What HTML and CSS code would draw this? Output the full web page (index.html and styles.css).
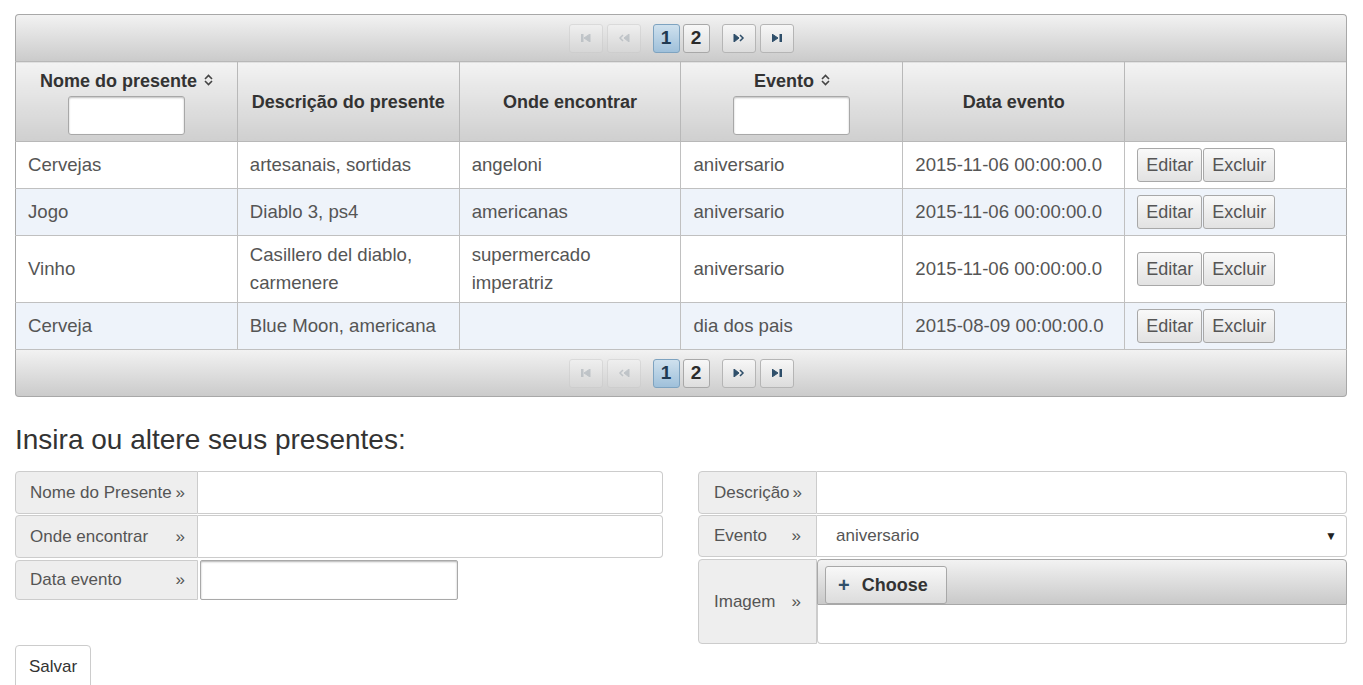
FILE: index.html
```html
<!DOCTYPE html>
<html lang="pt">
<head>
<meta charset="utf-8">
<title>Presentes</title>
<link rel="stylesheet" href="styles.css">
</head>
<body>
<div class="page">
  <div class="datatable">
    <div class="paginator top">
      <span class="pbtn disabled"><svg width="10" height="8" viewBox="0 0 10 8"><rect x="0" y="0" width="2" height="8"/><path d="M9 0 L3 4 L9 8 Z"/></svg></span>
      <span class="pbtn disabled"><svg width="12" height="8" viewBox="0 0 12 8"><path d="M5 1 L2 4 L5 7" fill="none" stroke-width="1.5"/><path d="M11 0 L6 4 L11 8 Z"/></svg></span>
      <span class="pages"><span class="page-num active">1</span><span class="page-num">2</span></span>
      <span class="pbtn"><svg width="12" height="8" viewBox="0 0 12 8"><path d="M1 0 L6 4 L1 8 Z"/><path d="M7 1 L10 4 L7 7" fill="none" stroke-width="1.5"/></svg></span>
      <span class="pbtn"><svg width="10" height="8" viewBox="0 0 10 8"><path d="M0 0 L6 4 L0 8 Z"/><rect x="8" y="0" width="2" height="8"/></svg></span>
    </div>
    <table class="grid">
      <thead>
        <tr>
          <th><div class="th-title">Nome do presente <span class="sort"><svg width="9" height="12" viewBox="0 0 9 12"><path d="M1 5 L4.5 1.5 L8 5 M1 7 L4.5 10.5 L8 7" fill="none" stroke-width="1.6"/></svg></span></div><input class="filter" type="text"></th>
          <th><div class="th-title">Descrição do presente</div></th>
          <th><div class="th-title">Onde encontrar</div></th>
          <th><div class="th-title">Evento <span class="sort"><svg width="9" height="12" viewBox="0 0 9 12"><path d="M1 5 L4.5 1.5 L8 5 M1 7 L4.5 10.5 L8 7" fill="none" stroke-width="1.6"/></svg></span></div><input class="filter" type="text"></th>
          <th><div class="th-title">Data evento</div></th>
          <th></th>
        </tr>
      </thead>
      <tbody>
        <tr>
          <td>Cervejas</td><td>artesanais, sortidas</td><td>angeloni</td><td>aniversario</td><td>2015-11-06 00:00:00.0</td>
          <td><span class="btn">Editar</span><span class="btn">Excluir</span></td>
        </tr>
        <tr class="alt">
          <td>Jogo</td><td>Diablo 3, ps4</td><td>americanas</td><td>aniversario</td><td>2015-11-06 00:00:00.0</td>
          <td><span class="btn">Editar</span><span class="btn">Excluir</span></td>
        </tr>
        <tr>
          <td>Vinho</td><td>Casillero del diablo, carmenere</td><td>supermercado imperatriz</td><td>aniversario</td><td>2015-11-06 00:00:00.0</td>
          <td><span class="btn">Editar</span><span class="btn">Excluir</span></td>
        </tr>
        <tr class="alt">
          <td>Cerveja</td><td>Blue Moon, americana</td><td></td><td>dia dos pais</td><td>2015-08-09 00:00:00.0</td>
          <td><span class="btn">Editar</span><span class="btn">Excluir</span></td>
        </tr>
      </tbody>
    </table>
    <div class="paginator bottom">
      <span class="pbtn disabled"><svg width="10" height="8" viewBox="0 0 10 8"><rect x="0" y="0" width="2" height="8"/><path d="M9 0 L3 4 L9 8 Z"/></svg></span>
      <span class="pbtn disabled"><svg width="12" height="8" viewBox="0 0 12 8"><path d="M5 1 L2 4 L5 7" fill="none" stroke-width="1.5"/><path d="M11 0 L6 4 L11 8 Z"/></svg></span>
      <span class="pages"><span class="page-num active">1</span><span class="page-num">2</span></span>
      <span class="pbtn"><svg width="12" height="8" viewBox="0 0 12 8"><path d="M1 0 L6 4 L1 8 Z"/><path d="M7 1 L10 4 L7 7" fill="none" stroke-width="1.5"/></svg></span>
      <span class="pbtn"><svg width="10" height="8" viewBox="0 0 10 8"><path d="M0 0 L6 4 L0 8 Z"/><rect x="8" y="0" width="2" height="8"/></svg></span>
    </div>
  </div>

  <h2 class="form-title">Insira ou altere seus presentes:</h2>

  <div class="form-grid">
    <div class="col">
      <div class="igroup g1">
        <span class="addon w-left"><span>Nome do Presente</span><span>»</span></span>
        <span class="field"></span>
      </div>
      <div class="igroup g2">
        <span class="addon w-left"><span>Onde encontrar</span><span>»</span></span>
        <span class="field"></span>
      </div>
      <div class="igroup g3">
        <span class="addon w-left"><span>Data evento</span><span>»</span></span>
        <span class="plain-input"></span>
      </div>
    </div>
    <div class="col">
      <div class="igroup g1">
        <span class="addon w-right"><span>Descrição</span><span>»</span></span>
        <span class="field"></span>
      </div>
      <div class="igroup g2r">
        <span class="addon w-right"><span>Evento</span><span>»</span></span>
        <span class="field select"><span>aniversario</span><span class="caret">▼</span></span>
      </div>
      <div class="igroup g3r">
        <span class="addon w-right"><span>Imagem</span><span>»</span></span>
        <span class="upload">
          <span class="upload-bar"><span class="choose"><span class="plus">+</span>Choose</span></span>
          <span class="upload-body"></span>
        </span>
      </div>
    </div>
  </div>
  <div class="actions"><span class="save">Salvar</span></div>
</div>
</body>
</html>
```
FILE: styles.css
```css
* { box-sizing: border-box; }
html, body { margin: 0; padding: 0; background: #fff; }
body { font-family: "Liberation Sans", Arial, sans-serif; color: #555; overflow: hidden; }
.page { padding: 14px 16px 0 15px; width: 1363px; }

.datatable { width: 1332px; }
.paginator {
  height: 47px;
  border: 1px solid #a8a8a8;
  background: linear-gradient(#f2f2f2, #cbcbcb);
  display: flex;
  align-items: center;
  justify-content: center;
  gap: 4px;
  padding-left: 0;
}
.paginator.top { border-radius: 4px 4px 0 0; border-bottom: none; }
.paginator.bottom { border-radius: 0 0 4px 4px; border-top: none; }
.pbtn {
  width: 34px; height: 29px;
  border: 1px solid #b5b5b5;
  border-radius: 3px;
  background: linear-gradient(#f7f7f7, #dcdcdc);
  display: inline-flex; align-items: center; justify-content: center;
}
.pbtn svg { fill: #2f4f6a; stroke: #2f4f6a; }
.pbtn.disabled { opacity: 0.45; border-color: #c8c8c8; }
.pbtn.disabled svg { fill: #9aa4ad; stroke: #9aa4ad; }
.pages { display: inline-flex; gap: 3px; margin: 0 8px 0 8px; }
.page-num {
  min-width: 27px; height: 29px; padding: 0 5px;
  border: 1px solid #a8a8a8;
  border-radius: 3px;
  background: linear-gradient(#f8f8f8, #dedede);
  font-weight: bold; font-size: 19px; color: #2b2b2b;
  display: inline-flex; align-items: center; justify-content: center;
}
.page-num.active {
  background: linear-gradient(#cfe1ee, #9fc0da);
  border-color: #7ea3c0;
  color: #1f3a52;
}

.grid {
  width: 1332px;
  border-collapse: collapse;
  table-layout: fixed;
}
.grid th, .grid td { border: 1px solid #c0c0c0; }
.grid th {
  height: 80px;
  background: linear-gradient(#f3f3f3, #cfcfcf);
  color: #333;
  font-size: 18px;
  font-weight: bold;
  text-align: center;
  vertical-align: middle;
  padding: 4px 6px;
  border-color: #b8b8b8;
}
.th-title { line-height: 22px; }
.sort { display: inline-block; margin-left: 2px; vertical-align: 1px; }
.sort svg { stroke: #444; }
.filter {
  display: block;
  margin: 4px auto 0;
  width: 117px; height: 39px;
  border: 1px solid #a8a8a8;
  border-radius: 3px;
  box-shadow: inset 0 1px 2px rgba(0,0,0,0.25);
  background: #fff;
}
.grid thead th:first-child, .grid thead th:nth-child(4) { padding-top: 4px; padding-bottom: 4px; }
.grid td {
  font-size: 18.6px;
  line-height: 28px;
  padding: 9px 12px;
  color: #555;
  vertical-align: middle;
}
.grid tbody tr:nth-child(3) td { padding-top: 5px; padding-bottom: 5px; }
.grid td:last-child { padding: 6px 12px; }
.grid tr.alt td { background: #eef3fa; }
.grid td:first-child, .grid th:first-child { border-left-color: #a8a8a8; }
.grid td:last-child, .grid th:last-child { border-right-color: #a8a8a8; }

.btn {
  display: inline-block;
  height: 34px;
  line-height: 32px;
  padding: 0 8px;
  font-size: 18px;
  color: #555;
  border: 1px solid #a8a8a8;
  border-radius: 3px;
  background: linear-gradient(#f9f9f9, #e2e2e2);
  margin-right: 1px;
}

.form-title {
  margin: 26px 0 14px;
  font-size: 28px;
  font-weight: normal;
  color: #333;
  line-height: 34px;
}

.form-grid {
  display: grid;
  grid-template-columns: 648px 649px;
  column-gap: 35px;
  width: 1332px;
}
.col { display: flex; flex-direction: column; }
.igroup { display: flex; }
.igroup.g1 { height: 43px; }
.igroup.g2 { height: 43px; margin-top: 1px; }
.igroup.g3 { height: 40px; margin-top: 2px; }
.igroup.g2r { height: 42px; margin-top: 1px; }
.igroup.g3r { height: 85px; margin-top: 2px; }
.addon {
  display: flex;
  align-items: center;
  justify-content: space-between;
  gap: 3px;
  white-space: nowrap;
  background: #eee;
  border: 1px solid #ccc;
  border-radius: 4px 0 0 4px;
  font-size: 17px;
  color: #555;
  flex: none;
}
.addon.w-left { width: 183px; padding: 0 12px 0 14px; }
.addon.w-right { width: 119px; padding: 0 15px 0 15px; }
.field {
  flex: 1;
  border: 1px solid #ccc;
  border-left: none;
  border-radius: 0 4px 4px 0;
  background: #fff;
}
.field.select {
  display: flex; align-items: center; justify-content: space-between;
  padding: 0 9px 0 19px;
  font-size: 17px; color: #555;
}
.caret { font-size: 12px; color: #222; }
.plain-input {
  width: 258px;
  margin-left: 2px;
  border: 1px solid #a9a9a9;
  border-radius: 2px;
  box-shadow: inset 0 1px 2px rgba(0,0,0,0.3);
  background: #fff;
}
.upload { flex: 1; display: flex; flex-direction: column; }
.upload-bar {
  height: 46px;
  border: 1px solid #a8a8a8;
  border-radius: 4px 4px 0 0;
  background: linear-gradient(#f2f2f2, #c9c9c9);
  padding: 6px 7px;
  display: flex;
}
.choose {
  display: inline-flex; align-items: center;
  width: 122px; height: 38px;
  border: 1px solid #a8a8a8;
  border-radius: 3px;
  background: linear-gradient(#f8f8f8, #dcdcdc);
  font-size: 18px; font-weight: bold; color: #333;
  padding-left: 12px;
}
.plus { color: #2f4f6a; font-size: 20px; margin-right: 12px; font-weight: bold; }
.upload-body {
  flex: 1;
  border: 1px solid #ccc;
  border-top: none;
  border-radius: 0 0 4px 4px;
  background: #fff;
}

.actions { margin-top: 1px; }
.save {
  display: inline-block;
  width: 76px; height: 44px;
  line-height: 42px;
  text-align: center;
  border: 1px solid #ccc;
  border-radius: 4px;
  font-size: 17px;
  color: #333;
  background: #fff;
}
```
